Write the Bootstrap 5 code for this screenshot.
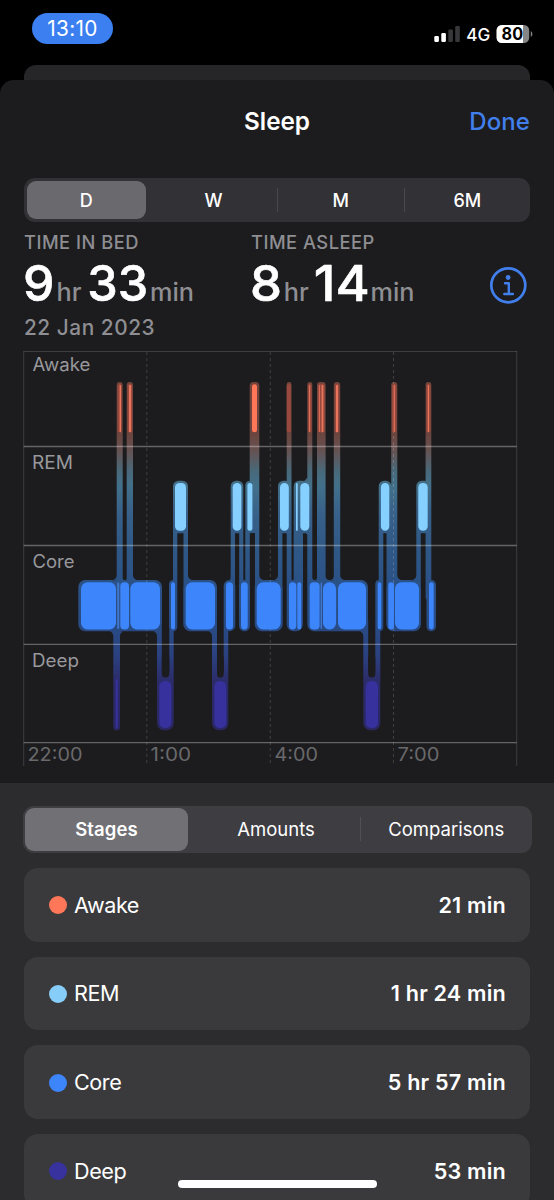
<!DOCTYPE html>
<html lang="en" data-bs-theme="dark">
<head>
<meta charset="utf-8">
<meta name="viewport" content="width=device-width, initial-scale=1">
<title>Sleep</title>
<link href="https://cdn.jsdelivr.net/npm/bootstrap@5.3.0/dist/css/bootstrap.min.css" rel="stylesheet">
<style>
body{background:#000;font-family:Inter,"Liberation Sans",sans-serif;color:#fff;line-height:1}
.screen{width:554px;height:1200px;overflow:hidden}
.status{height:65px;padding:13px 21px 0 32px}
.clock{width:81px;height:31px;padding-top:2px;background:#3b7ff0;font-size:20.8px;letter-spacing:.3px}
.signal{margin-top:10px}
.back-sheet{height:15px;margin:0 24px;background:#262628;border-radius:12px 12px 0 0}
.sheet{height:703px;background:#1c1c1e;border-radius:14px 14px 0 0}
.corner-fill{background:linear-gradient(#262628,#262628) 24px 0/506px 14px no-repeat}
.head{height:98px;padding:0 24px 14px;display:grid;grid-template-columns:1fr auto 1fr;font-size:24px}
.head h1{font-size:24.3px;font-weight:600;letter-spacing:0}
.done{color:#417fec;font-weight:500;letter-spacing:.1px}
.seg{background:#323136;border-radius:11px;font-size:18px;font-weight:500}
.seg-range{height:43.5px;margin:0 24px;padding:2.5px 0 2.5px 2.5px}
.seg-range>*{flex:0 0 126.7px;padding-top:1.5px}
.seg-range>.on{flex-basis:119.7px;margin-right:4px;background:#6a696e;border-radius:9px}
.rule{border-left:1.5px solid #49484e}
.seg-range .rule,.seg-view .rule{height:24px}
.seg-view{background:#3e3d42;height:47.5px;margin:0 22px 15px 23px;padding:2.5px 2.5px 2.5px 2px;font-size:18.5px;font-weight:400}
.seg-view .rule{padding-left:2px;border-color:#515056}
.seg-view>.on{width:163px;background:#717075;border-radius:9px;font-weight:600;letter-spacing:.1px}
.totals{height:128px;padding:11.5px 0 0 24px;color:#8e8e93;font-weight:500}
.total{width:227px}
.total svg{margin:-1px 0 -4px}
.cap{font-size:18.3px;letter-spacing:.5px;white-space:nowrap}
.big{font-size:50px;font-weight:500;stroke:#fff;stroke-width:.6px;stroke-linejoin:round}
.unit{font-size:25px}
.day{font-size:20.8px;letter-spacing:.55px;margin-top:5.5px}
.info{margin:32px 0 0 10px}
.panel{height:417px;background:#2c2c2e;padding-top:22.5px}
.stage{height:73.7px;margin:0 24px 15px;padding:1px 24px 0 24.5px;background:#3a3a3c;border-radius:14px;font-size:21.6px}
.stage span{letter-spacing:-.45px}
.dot{width:18px;height:18px;border-radius:50%;margin-right:7.5px}
.stage b{font-weight:600;letter-spacing:.2px}
.home{left:178px;top:1180px;width:199px;height:8px;background:#fff;border-radius:4px}
svg{display:block}
</style>
<script src="https://cdn.jsdelivr.net/npm/bootstrap@5.3.0/dist/js/bootstrap.bundle.min.js"></script>
</head>
<body>
<div class="screen position-relative">
  <div class="status d-flex justify-content-between">
    <div class="clock rounded-pill d-flex align-items-center justify-content-center">13:10</div>
    <svg class="signal" width="101" height="24" viewBox="432 23 101 24">
      <g fill="#fff"><rect x="434.3" y="36" width="4.6" height="6" rx="1.2"/><rect x="441.3" y="33" width="4.6" height="9" rx="1.2"/></g>
      <g fill="#38383a"><rect x="448.3" y="29.5" width="4.6" height="12.5" rx="1.2"/><rect x="455.2" y="26" width="4.6" height="16" rx="1.2"/></g>
      <text x="466.3" y="41" font-size="17.5" font-weight="500" fill="#fff" textLength="24" lengthAdjust="spacingAndGlyphs">4G</text>
      <rect x="496.6" y="25" width="32.6" height="18" rx="5.3" fill="#858585"/>
      <path d="M501.9 25H523V43H501.9a5.3 5.3 0 0 1-5.3-5.3V30.3a5.3 5.3 0 0 1 5.3-5.3z" fill="#fff"/>
      <path d="M530.8 31a3.6 3.6 0 0 1 0 6z" fill="#858585"/>
      <text x="501.6" y="40.3" font-size="17" font-weight="700" fill="#000" textLength="21.5" lengthAdjust="spacingAndGlyphs">80</text>
    </svg>
  </div>
  <div class="back-sheet"></div>
  <div class="corner-fill">
  <main class="sheet">
    <header class="head align-items-center">
      <span></span><h1 class="m-0">Sleep</h1><a class="done text-end text-decoration-none">Done</a>
    </header>
    <nav class="seg seg-range d-flex align-items-center">
      <div class="on h-100 d-flex align-items-center justify-content-center">D</div>
      <div class="d-flex align-items-center justify-content-center">W</div>
      <div class="rule d-flex align-items-center justify-content-center">M</div>
      <div class="rule d-flex align-items-center justify-content-center">6M</div>
    </nav>
    <section class="totals d-flex">
      <div class="total">
        <div class="cap">TIME IN BED</div>
        <svg width="200" height="66" viewBox="24 250 200 66" overflow="visible">
          <text class="big" fill="#fff" x="23" y="301" textLength="31.5" lengthAdjust="spacingAndGlyphs">9</text><text class="unit" fill="#8e8e93" x="56.5" y="301" textLength="25" lengthAdjust="spacingAndGlyphs">hr</text><text class="big" fill="#fff" x="87.3" y="301" textLength="61" lengthAdjust="spacingAndGlyphs">33</text><text class="unit" fill="#8e8e93" x="150" y="301" textLength="44" lengthAdjust="spacingAndGlyphs">min</text>
        </svg>
        <div class="day">22 Jan 2023</div>
      </div>
      <div class="total">
        <div class="cap">TIME ASLEEP</div>
        <svg width="200" height="66" viewBox="251 250 200 66" overflow="visible">
          <text class="big" fill="#fff" x="250" y="301" textLength="32" lengthAdjust="spacingAndGlyphs">8</text><text class="unit" fill="#8e8e93" x="283.8" y="301" textLength="25" lengthAdjust="spacingAndGlyphs">hr</text><text class="big" fill="#fff" x="313.8" y="301" textLength="56" lengthAdjust="spacingAndGlyphs">14</text><text class="unit" fill="#8e8e93" x="370.5" y="301" textLength="44" lengthAdjust="spacingAndGlyphs">min</text>
        </svg>
      </div>
      <svg class="info" width="40" height="40" viewBox="0 0 40 40">
        <g fill="none" stroke="#417fec" stroke-linecap="round" stroke-linejoin="round"><circle cx="20.3" cy="20.3" r="17" stroke-width="2.7"/><path d="M17 18.2h3.8v10.6M16.3 29h8.6" stroke-width="2.4"/></g><circle cx="20.1" cy="12.5" r="2.4" fill="#417fec"/>
      </svg>
    </section>
    <svg id="chart" width="554" height="430" viewBox="0 350 554 430">
      <defs>
        <linearGradient id="halo" gradientUnits="userSpaceOnUse" x1="0" y1="380" x2="0" y2="732">
          <stop offset="0" stop-color="#74443b"/><stop offset=".15" stop-color="#6b443e"/><stop offset=".2" stop-color="#665252"/>
          <stop offset=".26" stop-color="#48697a"/><stop offset=".3" stop-color="#42708a"/><stop offset=".39" stop-color="#365f89"/>
          <stop offset=".48" stop-color="#2f5886"/><stop offset=".57" stop-color="#2b5287"/><stop offset=".71" stop-color="#284a84"/>
          <stop offset=".78" stop-color="#2b4180"/><stop offset=".86" stop-color="#2b2b68"/><stop offset="1" stop-color="#2a2763"/>
        </linearGradient>
      </defs>
      <path id="shell" fill="url(#halo)"/>
      <g id="gaps" fill="#1c1c1e"></g>
      <g stroke="#fff" fill="none">
        <path d="M23.7 351.5H516.7" stroke-opacity=".15"/><path d="M23.7 351V766M516.7 351V766" stroke-opacity=".15"/>
        <path d="M23.7 446.5H516.7M23.7 545.5H516.7M23.7 644.3H516.7M23.7 742.7H516.7" stroke-opacity=".32" stroke-width="1.3"/>
        <path d="M146.8 352V764M270.3 352V764M393.5 352V764" stroke-opacity=".16" stroke-dasharray="3 3"/>
      </g>
      <g id="bars"></g>
      <g font-size="18.3" fill="#98989d">
        <text x="32.5" y="370.7" textLength="58" lengthAdjust="spacingAndGlyphs">Awake</text>
        <text x="32" y="469.4" textLength="41" lengthAdjust="spacingAndGlyphs">REM</text>
        <text x="32.5" y="568.3" textLength="42" lengthAdjust="spacingAndGlyphs">Core</text>
        <text x="32" y="667" textLength="47" lengthAdjust="spacingAndGlyphs">Deep</text>
      </g>
      <g font-size="18.5" fill="#69696c">
        <text x="27.5" y="761" textLength="55" lengthAdjust="spacingAndGlyphs">22:00</text>
        <text x="150.5" y="761" textLength="40.5" lengthAdjust="spacingAndGlyphs">1:00</text>
        <text x="274.5" y="761" textLength="43.5" lengthAdjust="spacingAndGlyphs">4:00</text>
        <text x="397.5" y="761" textLength="42" lengthAdjust="spacingAndGlyphs">7:00</text>
      </g>
    </svg>
  </main>
  </div>
  <section class="panel">
    <nav class="seg seg-view d-flex align-items-center">
      <div class="on h-100 d-flex align-items-center justify-content-center">Stages</div>
      <div class="d-flex align-items-center justify-content-center" style="width:172px;padding-left:4px">Amounts</div>
      <div class="rule d-flex align-items-center justify-content-center flex-fill">Comparisons</div>
    </nav>
    <div class="stage d-flex align-items-center"><i class="dot" style="background:#ff7759"></i><span class="me-auto">Awake</span><b>21 min</b></div>
    <div class="stage d-flex align-items-center"><i class="dot" style="background:#86cdf9"></i><span class="me-auto">REM</span><b>1 hr 24 min</b></div>
    <div class="stage d-flex align-items-center"><i class="dot" style="background:#3c85fb"></i><span class="me-auto">Core</span><b>5 hr 57 min</b></div>
    <div class="stage d-flex align-items-center"><i class="dot" style="background:#38329e"></i><span class="me-auto">Deep</span><b>53 min</b></div>
  </section>
  <div class="home position-absolute"></div>
</div>
<script>
// Rounded box from x1 to x2, y1 to y2, as a path fragment
function box(x1, x2, y1, y2, r) {
  r = Math.min(r, (x2 - x1) / 2);
  const w = x2 - x1 - 2 * r, h = y2 - y1 - 2 * r, a = `a${r} ${r} 0 0 1 `;
  return `M${x1 + r} ${y1}h${w}${a}${r} ${r}v${h}${a}${-r} ${r}h${-w}${a}${-r} ${-r}v${-h}${a}${r} ${-r}z`;
}
// Concave fillet in the corner at (x, y); dx and dy point into the open side
function fillet(x, y, dx, dy, r) {
  return `M${x} ${y}v${dy * r}A${r} ${r} 0 0 ${dx * dy > 0 ? 1 : 0} ${x + dx * r} ${y}z`;
}
let d = '';
// awake columns run down to the core band
[[116.7,122.7],[126.7,133],[286.7,291.5],[307.3,312.3],[317,325.6],[333.8,340.2],[391.2,397.3],[425.6,431.3]]
  .forEach(([a, b]) => d += box(a, b, 382, 600, 3));
d += box(249.7, 259.3, 382, 533, 4) + box(255, 259.3, 500, 600, 0);
// REM shells and legs
[[173,188],[230.7,243.3],[245.3,254.5],[278,291],[293.7,311],[378.7,391.3],[416.3,430]]
  .forEach(([a, b]) => d += box(a, b, 480.7, 533.3, 5.5));
[[173,177.3],[183.5,188],[230.7,235],[239.2,243.3],[245.3,249.8],[278,282.4],[293.7,303],[378.7,383.3],[386.5,391.3],[416.3,420.8]]
  .forEach(([a, b]) => d += box(a, b, 505, 600, 0));
// core shells
[[78.3,162],[169,177.3],[183.3,217],[223.7,235.3],[239,250],[254.7,282.7],[286.7,302.9],[307.3,368],[375.3,383.3],[386.3,421],[426.5,436]]
  .forEach(([a, b]) => d += box(a, b, 580, 631.3, 7));
// deep shells and legs
[[113.3,120],[157,173.7],[212,228.3],[363.3,380.3]].forEach(([a, b]) => d += box(a, b, 672, 730.3, 7));
[[113.3,120],[157,161.8],[169.3,173.7],[212,217],[223.7,228.3],[363.3,368.2],[375.3,380.3]]
  .forEach(([a, b]) => d += box(a, b, 620, 700, 0));
[[116.7,-1,5],[122.7,1,2],[126.7,-1,2],[133,1,5],[188,1,5],[230.7,-1,2.5],[259.3,1,5],[278,-1,5],[291.5,1,1.2],
 [312.3,1,2.4],[317,-1,2.4],[325.6,1,4.1],[333.8,-1,4.1],[340.2,1,5],[397.3,1,5],[416.3,-1,5]]
  .forEach(([x, s, r]) => d += fillet(x, 580.2, s, -1, r));
[[113.3,-1],[120,1],[157,-1],[212,-1],[363.3,-1]].forEach(([x, s]) => d += fillet(x, 631.1, s, 1, 5));
d += fillet(307.4, 480.9, -1, -1, 5) + fillet(307.4, 533.1, -1, 1, 3);
document.getElementById('shell').setAttribute('d', d);
// the rounded ends of the gaps above the deep bars
document.getElementById('gaps').innerHTML = [[161.8,169.3],[217,223.7],[368.2,375.3]]
  .map(([a, b]) => `<path d="${box(a, b, 655, 677.5, 3.8)}"/>`).join('');
let out = '';
const bar = (a, b, y1, y2, c, r) => out += `<path d="${box(a, b, y1, y2, r)}" fill="${c}"/>`;
[[117.6,121.8],[127.6,132.2],[286.7,290.9],[307.9,311.6],[318,324.8],[334.8,339.2],[392,396.5],[426.3,430.6]]
  .forEach(([a, b]) => bar(a, b, 384, 432.3, '#98493d', 2));
[[119.6,121],[129,131.1],[309.1,310.1],[318.9,319.8],[321.6,323.3],[336,338],[393.7,394.8],[427.8,429]]
  .forEach(([a, b]) => bar(a, b, 385, 432.3, '#e9755d', .5));
bar(252, 257, 384.3, 432.3, '#ff7759', 2.5);
[[175,186],[232.7,241.4],[247.4,252.4],[280,288.8],[296,297.7],[300.3,309.3],[380.9,389.3],[418.3,427.7]]
  .forEach(([a, b]) => bar(a, b, 483, 530.8, '#86d0ff', 4.5));
[[81,116],[120.3,129],[130.3,160],[171,175],[185.7,215],[226,233],[241,247.7],[256.7,280.7],[289,296.3],[297.3,301.3],
 [309.7,319.6],[323,336.1],[338,366],[377.7,381.3],[388.3,394],[395,419],[429,433.7]]
  .forEach(([a, b]) => bar(a, b, 582.3, 629.4, '#3d85fb', b - a > 12 ? 6.5 : 4));
[[117.2,119.2],[320.6,322]].forEach(([a, b]) => bar(a, b, 582.5, 629, '#3f78ce', 1));
[[159.3,171.3],[214.3,226.3],[365.7,378]].forEach(([a, b]) => bar(a, b, 681, 728, '#37319d', 5.5));
bar(115.7, 117.8, 679, 728, '#37319d', 1);
document.getElementById('bars').innerHTML = out;
</script>
</body>
</html>
